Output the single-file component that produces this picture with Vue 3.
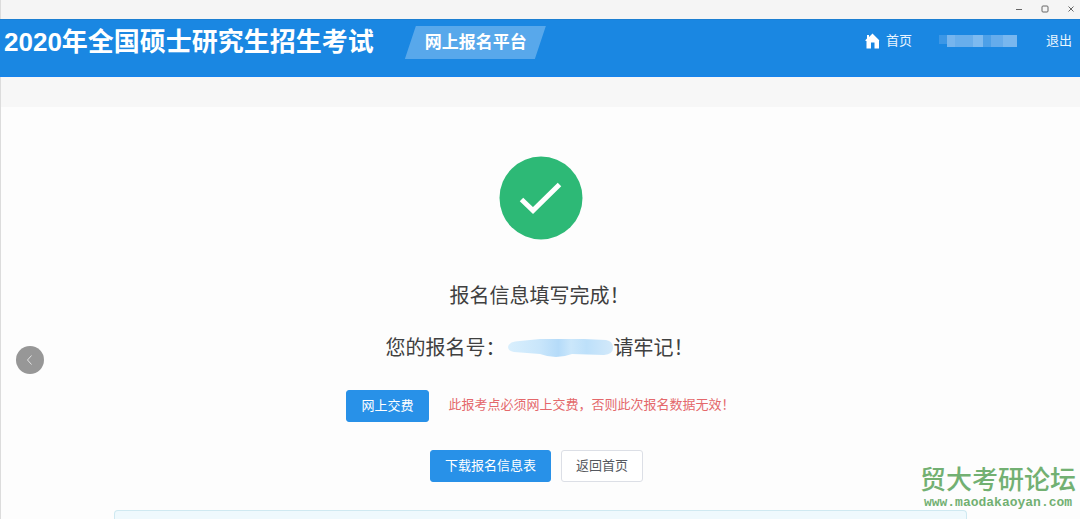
<script setup>
const site = {
  title: '2020年全国硕士研究生招生考试',
  badge: '网上报名平台',
}
</script>

<template>
  <div class="window">
    <div class="titlebar">
      <button class="win-btn" aria-label="最小化">
        <svg width="8" height="8" viewBox="0 0 8 8"><path d="M1 4.5H7" /></svg>
      </button>
      <button class="win-btn" aria-label="最大化">
        <svg width="8" height="8" viewBox="0 0 8 8"><rect x="1" y="1" width="6" height="6" rx="1" /></svg>
      </button>
      <button class="win-btn" aria-label="关闭">
        <svg width="8" height="8" viewBox="0 0 8 8"><path d="M1.5 1.5L6.5 6.5M6.5 1.5L1.5 6.5" /></svg>
      </button>
    </div>

    <header class="header">
      <h1 class="title">{{ site.title }}</h1>
      <span class="badge">{{ site.badge }}</span>
      <nav class="nav">
        <a class="nav-link" href="#">
          <svg class="home" width="15" height="16" viewBox="0 0 15 16">
            <path fill="currentColor" d="M2 2H4V4L7.500 0.500L14.500 7.500H14V15.500H9.500V9.500H6V15.500H1.500V8H0.500V7L2 5.500Z" />
          </svg>
          首页
        </a>
        <svg class="user" width="80" height="13" viewBox="0 0 80 13" aria-hidden="true">
          <rect x="0" y="0" width="8" height="9" fill="#3c97e6" />
          <rect x="8" y="0" width="8" height="12" fill="#76b5ee" />
          <rect x="16" y="0" width="18" height="12" fill="#68aeec" />
          <rect x="34" y="0" width="10" height="12" fill="#7dbaf0" />
          <rect x="44" y="0" width="8" height="12" fill="#4da0e8" />
          <rect x="52" y="0" width="12" height="12" fill="#65acec" />
          <rect x="64" y="0" width="14" height="12" fill="#78b7ef" />
        </svg>
        <a class="nav-link" href="#">退出</a>
      </nav>
    </header>

    <div class="strip"></div>

    <main class="content">
      <button class="back" aria-label="后退">
        <svg width="12" height="12" viewBox="0 0 12 12"><path d="M7.500 1.500L3.500 6L7.500 10.500" /></svg>
      </button>
      <svg class="success" width="84" height="84" viewBox="0 0 84 84" aria-hidden="true">
        <circle cx="42" cy="42" r="41.500" fill="#2db976" />
        <path d="M22.500 43.500L34 54.500L60.500 28.500" fill="none" stroke="#fff" stroke-width="5" />
      </svg>
      <p class="message">报名信息填写完成！</p>
      <p class="message number">
        <span>您的报名号：</span>
        <svg class="smudge" width="108" height="20" viewBox="0 0 108 20" aria-hidden="true">
          <defs>
            <linearGradient id="smudge-fill">
              <stop offset="0" stop-color="#d9effd" />
              <stop offset="0.300" stop-color="#c9e6fb" />
              <stop offset="0.480" stop-color="#b5dbf9" />
              <stop offset="0.600" stop-color="#cbe7fb" />
              <stop offset="0.750" stop-color="#bde0fa" />
              <stop offset="1" stop-color="#d3e9fa" />
            </linearGradient>
          </defs>
          <path fill="url(#smudge-fill)" d="M2 9Q3 3 14 3L34 1H78L100 2Q107 3 107 10Q107 16 98 17L66 16Q58 19 50 19Q42 19 34 16L8 14Q2 13 2 9Z" />
        </svg>
        <span>请牢记！</span>
      </p>
      <div class="pay">
        <button class="btn primary">网上交费</button>
        <span class="warning">此报考点必须网上交费，否则此次报名数据无效！</span>
      </div>
      <div class="actions">
        <button class="btn primary">下载报名信息表</button>
        <button class="btn">返回首页</button>
      </div>
      <section class="notice"></section>
    </main>

    <div class="watermark">
      <span class="forum">贸大考研论坛</span>
      <span class="url">www.maodakaoyan.com</span>
    </div>
  </div>
</template>

<style>
body {
  background: #fdfdfd;
}
</style>

<style scoped>
.window {
  position: relative;
  box-sizing: border-box;
  height: 100vh;
  overflow: hidden;
  display: flex;
  flex-direction: column;
  background: #fdfdfd;
  font-family: "Liberation Sans", "Noto Sans CJK SC", sans-serif;
  color: #404040;
}
button {
  font-family: inherit;
  cursor: pointer;
}
.titlebar {
  flex: none;
  box-sizing: border-box;
  height: 19px;
  display: flex;
  justify-content: flex-end;
  align-items: center;
  gap: 18px;
  padding: 0 5px 2px 0;
  background: #f5f5f5;
  border-left: 1px solid #dcdcdc;
}
.win-btn {
  display: flex;
  padding: 0;
  border: 0;
  background: none;
}
.win-btn svg {
  fill: none;
  stroke: #666;
}
.header {
  flex: none;
  box-sizing: border-box;
  height: 58px;
  display: flex;
  align-items: flex-start;
  padding: 6px 8px 0 4px;
  background: #1a87e2;
  border-top: 1px solid #1c7fd2;
  border-bottom: 1px solid #1683ee;
  color: #fff;
}
.title {
  margin: 0;
  font-size: 26px;
  line-height: 32px;
  font-weight: 700;
  white-space: nowrap;
}
.badge {
  margin-left: 31px;
  padding: 0 19px 0 20px;
  background: #58a8eb;
  clip-path: polygon(11px 0, 100% 0, calc(100% - 11px) 100%, 0 100%);
  font-size: 17px;
  line-height: 33px;
  font-weight: 700;
  white-space: nowrap;
}
.nav {
  margin-left: auto;
  display: flex;
  align-items: center;
  gap: 27px;
  height: 30px;
}
.nav-link {
  display: flex;
  align-items: center;
  gap: 6px;
  color: #e9f5ff;
  font-size: 13px;
  line-height: 20px;
  text-decoration: none;
  white-space: nowrap;
}
.home {
  color: #fff;
}
.strip {
  flex: none;
  height: 30px;
  background: #f7f7f7;
  border-left: 1px solid #dcdcdc;
}
.content {
  position: relative;
  flex: 1;
  display: flex;
  flex-direction: column;
  align-items: center;
  padding-top: 49px;
  border-left: 1px solid #dcdcdc;
}
.back {
  position: absolute;
  left: 15px;
  top: 239px;
  width: 28px;
  height: 28px;
  display: flex;
  align-items: center;
  justify-content: center;
  padding: 0;
  border: 0;
  border-radius: 50%;
  background: #979797;
}
.back svg {
  fill: none;
  stroke: #e4e4e4;
}
.success {
  flex: none;
}
.message {
  margin: 41px 2px 0 0;
  font-size: 20px;
  line-height: 30px;
  white-space: nowrap;
}
.number {
  display: flex;
  align-items: center;
  margin-top: 22px;
}
.pay {
  display: flex;
  gap: 20px;
  margin-top: 27px;
}
.warning {
  color: #e4686b;
  font-size: 13px;
  line-height: 30px;
  white-space: nowrap;
}
.actions {
  display: flex;
  gap: 10px;
  margin: 28px 8px 0 0;
}
.btn {
  box-sizing: border-box;
  height: 32px;
  padding: 0 14px;
  border: 1px solid #dcdfe6;
  border-radius: 3px;
  background: #fff;
  color: #55585e;
  font-size: 13px;
  line-height: 30px;
  white-space: nowrap;
}
.primary {
  border-color: #2891e8;
  background: #2891e8;
  color: #fff;
}
.notice {
  flex: 1;
  box-sizing: border-box;
  width: 79%;
  margin-top: 28px;
  border: 1px solid #cfe9f1;
  border-bottom: 0;
  border-radius: 4px 4px 0 0;
  background: #eff9fd;
}
.watermark {
  position: absolute;
  right: 4px;
  bottom: 9px;
  display: flex;
  flex-direction: column;
  align-items: center;
  color: #72b072;
}
.forum {
  font-size: 26px;
  line-height: 32px;
  font-weight: 500;
}
.url {
  font-family: "Liberation Mono", monospace;
  font-size: 13px;
  line-height: 14px;
  font-weight: 700;
}
</style>
